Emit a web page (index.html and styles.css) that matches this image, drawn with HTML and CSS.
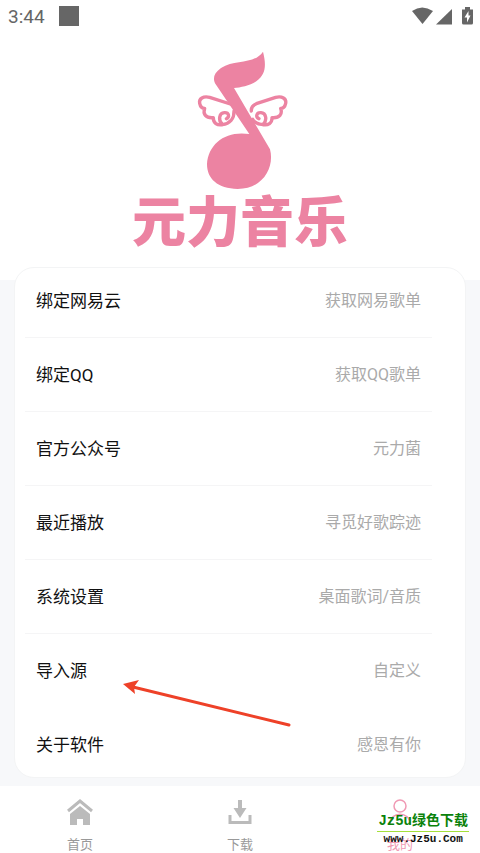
FILE: index.html
```html
<!DOCTYPE html>
<html lang="zh-CN">
<head>
    <meta charset="UTF-8">
    <meta name="viewport" content="width=device-width, initial-scale=1">
    <title>元力音乐</title>
    <link rel="stylesheet" href="styles.css">
</head>
<body>
<header class="header">
    <div class="status">
        <span class="status_time">3:44</span>
        <span class="status_app"></span>
        <svg class="status_icons" width="61" height="20" viewBox="0 0 61 20">
            <path d="M0 5Q10-2 21 5L10.500 18Z"/>
            <path d="M24 18.500H40V3Z"/>
            <path d="M50 3.500h3V1h5v2.500h3V17q0 1.500-1.500 1.500h-8Q50 18.500 50 17Z"/>
            <path class="bolt" d="M56.500 5L52.500 11.500H55V16.500L58.500 9.500H56.500Z"/>
        </svg>
    </div>
    <div class="logo">
        <svg class="logo_note" width="98" height="140" viewBox="32 30 294 420">
            <path class="fill" d="M248 35C258 75 257 103 228 124C209 137 180 143 161 144L269 328C283 380 250 447 172 447C112 445 80 417 80 372C84 310 137 271 207 282L104 130C97 114 101 99 122 84C165 57 220 75 248 35Z"/>
            <path class="wing" d="M150 192L88 172C69 167 55 176 58 190C60 200 66 205 73 205C67 222 76 235 99 233C98 249 111 257 126 254C148 251 162 236 161 213M126 254C112 240 117 219 132 218C146 217 149 231 138 236"/>
            <path class="wing" transform="translate(374 0) scale(-1 1)" d="M161 213C162 203 158 196 146 191L88 172C69 167 55 176 58 190C60 200 66 205 73 205C67 222 76 235 99 233C98 249 111 257 126 254C140 253 152 247 157 238M126 254C112 240 117 219 132 218C146 217 149 231 138 236"/>
        </svg>
        <h1 class="logo_name">元力音乐</h1>
    </div>
</header>

<main class="card">
    <ul class="menu">
        <li><a href="#"><span>绑定网易云</span><span class="menu_tip">获取网易歌单</span></a></li>
        <li><a href="#"><span>绑定QQ</span><span class="menu_tip">获取QQ歌单</span></a></li>
        <li><a href="#"><span>官方公众号</span><span class="menu_tip">元力菌</span></a></li>
        <li><a href="#"><span>最近播放</span><span class="menu_tip">寻觅好歌踪迹</span></a></li>
        <li><a href="#"><span>系统设置</span><span class="menu_tip">桌面歌词/音质</span></a></li>
        <li class="marked">
            <a href="#"><span>导入源</span><span class="menu_tip">自定义</span></a>
            <svg class="arrow" width="170" height="52" viewBox="0 0 170 52">
                <path class="arrow_line" d="M10 9L166 47"/>
                <path class="arrow_head" d="M0 6L16 2L11 9L12 16Z"/>
            </svg>
        </li>
        <li><a href="#"><span>关于软件</span><span class="menu_tip">感恩有你</span></a></li>
    </ul>
</main>

<nav class="tabs">
    <a href="#">
        <svg width="28" height="28" viewBox="0 0 28 28">
            <path class="tab_line" d="M2 13L14 3L26 13"/>
            <path class="tab_fill" d="M14 8L24 16V27H17V21H11V27H4V16Z"/>
        </svg>
        <span>首页</span>
    </a>
    <a href="#">
        <svg width="28" height="28" viewBox="0 0 28 28">
            <path class="tab_fill" d="M12 2h4v8h4.500L14 20L7.500 10H12Z"/>
            <path class="tab_line" d="M4 17V24.500H24V17"/>
        </svg>
        <span>下载</span>
    </a>
    <a href="#" class="current">
        <svg width="28" height="28" viewBox="0 0 28 28">
            <circle class="tab_thin" cx="14" cy="8" r="6"/>
            <path class="tab_thin" d="M4 26C4 13 24 13 24 26"/>
        </svg>
        <span>我的</span>
    </a>
    <div class="mark">
        <span class="mark_name">Jz5u绿色下载</span>
        <span class="mark_site">www.Jz5u.Com</span>
    </div>
</nav>
</body>
</html>
```
FILE: styles.css
```css
* {
    margin: 0;
    padding: 0;
    box-sizing: border-box;
}

body {
    display: flex;
    flex-direction: column;
    min-height: 100vh;
    background: #f7f8fa;
    font-family: Roboto, "Noto Sans CJK SC", sans-serif;
    color: #111;
}

ul {
    list-style: none;
}

a {
    color: inherit;
    text-decoration: none;
}

.header {
    height: 280px;
    background: #fff;
}

.status {
    display: flex;
    align-items: center;
    height: 32px;
    padding: 0 7px 0 8px;
    color: #666;
}

.status_time {
    font-size: 19px;
}

.status_app {
    width: 20px;
    height: 20px;
    margin-left: 14px;
    background: #666;
}

.status_icons {
    margin-left: auto;
    fill: #666;
}

.status_icons .bolt {
    fill: #fff;
}

.logo {
    display: flex;
    flex-direction: column;
    align-items: center;
    padding-top: 18px;
}

.logo_note .fill {
    fill: #ec83a2;
}

.logo_note .wing {
    fill: none;
    stroke: #ec83a2;
    stroke-width: 10;
    stroke-linecap: round;
    stroke-linejoin: round;
}

.logo_name {
    font-family: "Noto Sans CJK SC", sans-serif;
    font-size: 54px;
    font-weight: 900;
    line-height: 58px;
    color: #ec83a2;
}

.card {
    margin: -13px 14px 8px;
    border: 1px solid #f3f4f5;
    border-radius: 20px;
    background: #fff;
}

.menu {
    margin: 0 33px 0 10px;
}

.menu li {
    border-bottom: 1px solid #f5f5f6;
}

.menu a {
    display: flex;
    justify-content: space-between;
    padding: 25px 11px 24px;
    font-size: 17px;
    line-height: 24px;
}

.menu li:first-child a {
    padding-top: 21px;
}

.menu li:last-child {
    border-bottom: none;
}

.menu li:last-child a {
    padding-bottom: 20px;
}

.menu .menu_tip {
    font-size: 16px;
    color: #aaa;
}

.menu .marked {
    position: relative;
    border-color: transparent;
}

.arrow {
    position: absolute;
    left: 98px;
    top: 44px;
    z-index: 1;
    pointer-events: none;
}

.arrow_line {
    stroke: #ee4128;
    stroke-width: 3;
    stroke-linecap: round;
}

.arrow_head {
    fill: #ee4128;
}

.tabs {
    display: flex;
    position: relative;
    flex: 1;
    background: #fff;
}

.tabs a {
    display: flex;
    flex: 1;
    flex-direction: column;
    align-items: center;
    gap: 10px;
    padding-top: 12px;
    font-size: 13px;
    line-height: 18px;
    color: #999;
}

.tabs .current {
    color: #f09ab4;
}

.tab_fill {
    fill: #bbb;
}

.tab_line {
    fill: none;
    stroke: #bbb;
    stroke-width: 3;
}

.tab_thin {
    fill: none;
    stroke: #f09ab4;
    stroke-width: 1.5;
}

/* site badge over the last tab */
.mark {
    display: flex;
    position: absolute;
    right: 11px;
    top: 25px;
    flex-direction: column;
    align-items: center;
    font-weight: 700;
    white-space: nowrap;
}

.mark_name {
    padding: 0 1px;
    border-bottom: 1px solid #a5e03c;
    font-family: "Liberation Mono", "Noto Sans CJK SC", monospace;
    font-size: 14px;
    line-height: 20px;
    color: #0a820a;
}

.mark_site {
    font-family: "Liberation Mono", monospace;
    font-size: 11px;
    line-height: 14px;
    color: #111;
}
```
